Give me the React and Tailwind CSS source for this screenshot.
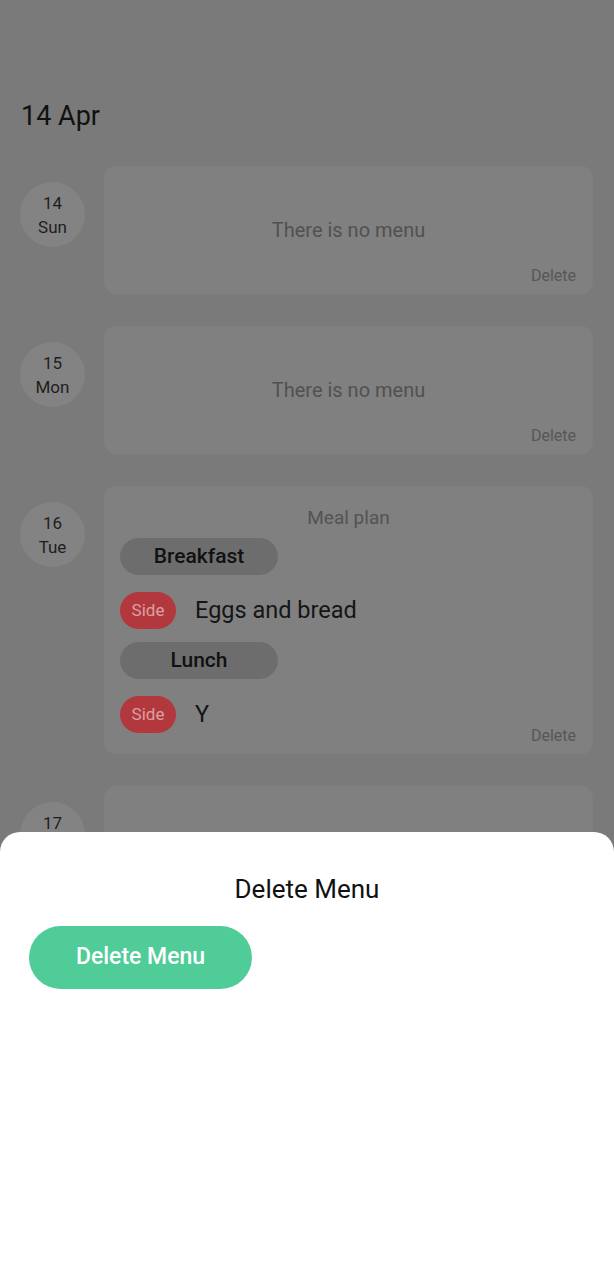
import React from 'react';

const days = [
  { day: '14', name: 'Sun', empty: true },
  { day: '15', name: 'Mon', empty: true },
  {
    day: '16',
    name: 'Tue',
    meals: [
      { title: 'Breakfast', items: ['Eggs and bread'] },
      { title: 'Lunch', items: ['Y'] },
    ],
  },
  { day: '17', name: 'Wed', empty: true },
];

const DayBadge = ({ day, name }) => (
  <div className="mt-4 w-[65px] h-[65px] shrink-0 rounded-full bg-[#838383] flex flex-col items-center justify-center text-[17px] leading-[24px] text-[#1e1e1e]">
    <span>{day}</span>
    <span>{name}</span>
  </div>
);

const DeleteLink = () => (
  <span className="absolute bottom-[8px] right-[17px] text-[16px] leading-[20px] text-[#575757]">Delete</span>
);

const EmptyCard = () => (
  <div className="relative flex-1 h-[128px] rounded-[12px] bg-[#808080] pt-[51px] text-center">
    <p className="text-[20px] leading-[26px] text-[#515151]">There is no menu</p>
    <DeleteLink />
  </div>
);

const MealCard = ({ meals }) => (
  <div className="relative flex-1 rounded-[12px] bg-[#808080] pt-[20px] pb-[21px] px-4">
    <p className="text-center text-[19px] leading-[24px] text-[#535353]">Meal plan</p>
    <div className="mt-[8px] flex flex-col">
      {meals.map((meal, i) => (
        <div key={meal.title} className={i > 0 ? 'mt-[13px]' : ''}>
          <div className="w-[158px] h-[37px] rounded-full bg-[#6d6d6d] flex items-center justify-center text-[21px] font-medium text-[#111]">
            {meal.title}
          </div>
          {meal.items.map((item) => (
            <div key={item} className="mt-[17px] flex items-center gap-[19px]">
              <span className="w-[56px] h-[37px] rounded-full bg-[#b3383d] flex items-center justify-center text-[17px] text-[#d9a1a2]">
                Side
              </span>
              <span className="text-[23.5px] text-[#151515]">{item}</span>
            </div>
          ))}
        </div>
      ))}
    </div>
    <DeleteLink />
  </div>
);

export default function App() {
  return (
    <div className="relative h-[1280px] overflow-hidden bg-[#7a7a7a]" style={{ fontFamily: 'Roboto, "Noto Sans", sans-serif' }}>
      <div className="pt-[100px] pl-[21px] pr-[21px]">
        <h1 className="text-[27px] leading-[32px] text-[#111]">14 Apr</h1>

        <div className="mt-[34px] flex flex-col gap-[32px]">
          {days.map((d) => (
            <div key={d.day} className="flex items-start gap-[19px] -ml-px">
              <DayBadge day={d.day} name={d.name} />
              {d.empty ? <EmptyCard /> : <MealCard meals={d.meals} />}
            </div>
          ))}
        </div>
      </div>

      {/* bottom sheet */}
      <div className="absolute left-0 right-0 top-[832px] bottom-0 bg-white rounded-t-[20px] px-[29px] pt-[41px]">
        <h2 className="text-center text-[26px] leading-[32px] text-[#111]">Delete Menu</h2>
        <button className="mt-[21px] w-[223px] h-[63px] rounded-full bg-[#50cc98] text-white text-[23px] font-medium">
          Delete Menu
        </button>
      </div>
    </div>
  );
}
